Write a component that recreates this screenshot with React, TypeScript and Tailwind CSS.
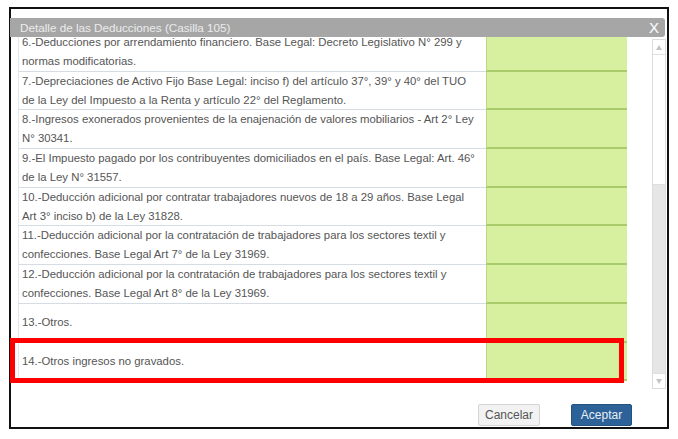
import React from "react";

const rows: string[][] = [
  ["6.-Deducciones por arrendamiento financiero. Base Legal: Decreto Legislativo N° 299 y", "normas modificatorias."],
  ["7.-Depreciaciones de Activo Fijo Base Legal: inciso f) del artículo 37°, 39° y 40° del TUO", "de la Ley del Impuesto a la Renta y artículo 22° del Reglamento."],
  ["8.-Ingresos exonerados provenientes de la enajenación de valores mobiliarios - Art 2° Ley", "N° 30341."],
  ["9.-El Impuesto pagado por los contribuyentes domiciliados en el país. Base Legal: Art. 46°", "de la Ley N° 31557."],
  ["10.-Deducción adicional por contratar trabajadores nuevos de 18 a 29 años. Base Legal", "Art 3° inciso b) de la Ley 31828."],
  ["11.-Deducción adicional por la contratación de trabajadores para los sectores textil y", "confecciones. Base Legal Art 7° de la Ley 31969."],
  ["12.-Deducción adicional por la contratación de trabajadores para los sectores textil y", "confecciones. Base Legal Art 8° de la Ley 31969."],
  ["13.-Otros."],
  ["14.-Otros ingresos no gravados."],
];

export default function App() {
  return (
    <div
      className="relative w-[678px] h-[439px] bg-white pt-[7px] pl-[9px] overflow-hidden"
      style={{ fontFamily: '"Liberation Sans", Arial, sans-serif' }}
    >
      <div className="w-[660px] h-[422px] border-2 border-[#111] flex flex-col">
        <div className="h-[9px] shrink-0" />
        <div className="h-[19px] shrink-0 mr-[2px] -ml-[1px] bg-[#a6a6a6] rounded-r-[3px] flex items-center justify-between pl-[10px] pr-[6px]">
          <span className="text-[11.7px] text-[#ececec] leading-none">Detalle de las Deducciones (Casilla 105)</span>
          <span className="text-[15px] text-white leading-none">X</span>
        </div>
        <div className="flex shrink-0 h-[354px]">
          <div className="ml-[7px] w-[609px] h-[345px] overflow-hidden">
            <div className="-mt-[4px]">
              {rows.map((r, i) => (
                <div key={i} className="flex">
                  <div className="w-[468px] min-h-[38.7px] border-b border-[#d6dce4] border-l border-l-[#e4e8ee] pl-[3px] flex flex-col justify-center text-[11.35px] leading-[18.8px] text-[#555]">
                    {r.map((l, j) => (
                      <div key={j} className="whitespace-nowrap">{l}</div>
                    ))}
                  </div>
                  <div className="w-[141px] min-h-[38.7px] bg-[#d6f0a0] border-b-2 border-[#a9cc6b] border-l border-l-[#b9da80]" />
                </div>
              ))}
            </div>
          </div>
          <div className="ml-[25px] mt-[2px] w-[14px] h-[350px] border border-[#dcdcdc] bg-[#e6e6e6] flex flex-col">
            <div className="h-[15px] bg-white border-b border-[#e0e0e0] flex items-center justify-center">
              <div className="w-0 h-0 border-l-[3px] border-r-[3px] border-b-[5px] border-l-transparent border-r-transparent border-b-[#c4c4c4]" />
            </div>
            <div className="h-[130px] bg-white border-b border-[#e0e0e0]" />
            <div className="flex-1" />
            <div className="h-[15px] bg-white border-t border-[#e0e0e0] flex items-center justify-center">
              <div className="w-0 h-0 border-l-[3px] border-r-[3px] border-t-[5px] border-l-transparent border-r-transparent border-t-[#c4c4c4]" />
            </div>
          </div>
        </div>
        <div className="flex-1 flex items-start justify-end pr-[35px] pt-[13px] gap-[31px]">
          <button className="w-[62px] h-[22px] bg-[#f2f2f2] border border-[#d4d4d4] rounded-[2px] text-[12px] text-[#555] leading-none">
            Cancelar
          </button>
          <button className="w-[61px] h-[22px] bg-[#2c6297] border border-[#24527f] rounded-[2px] text-[12px] text-[#e8eef5] leading-none">
            Aceptar
          </button>
        </div>
      </div>
      <div className="absolute left-[10px] top-[338px] w-[614px] h-[45px] border-[5px] border-[#ff0000]" />
    </div>
  );
}
